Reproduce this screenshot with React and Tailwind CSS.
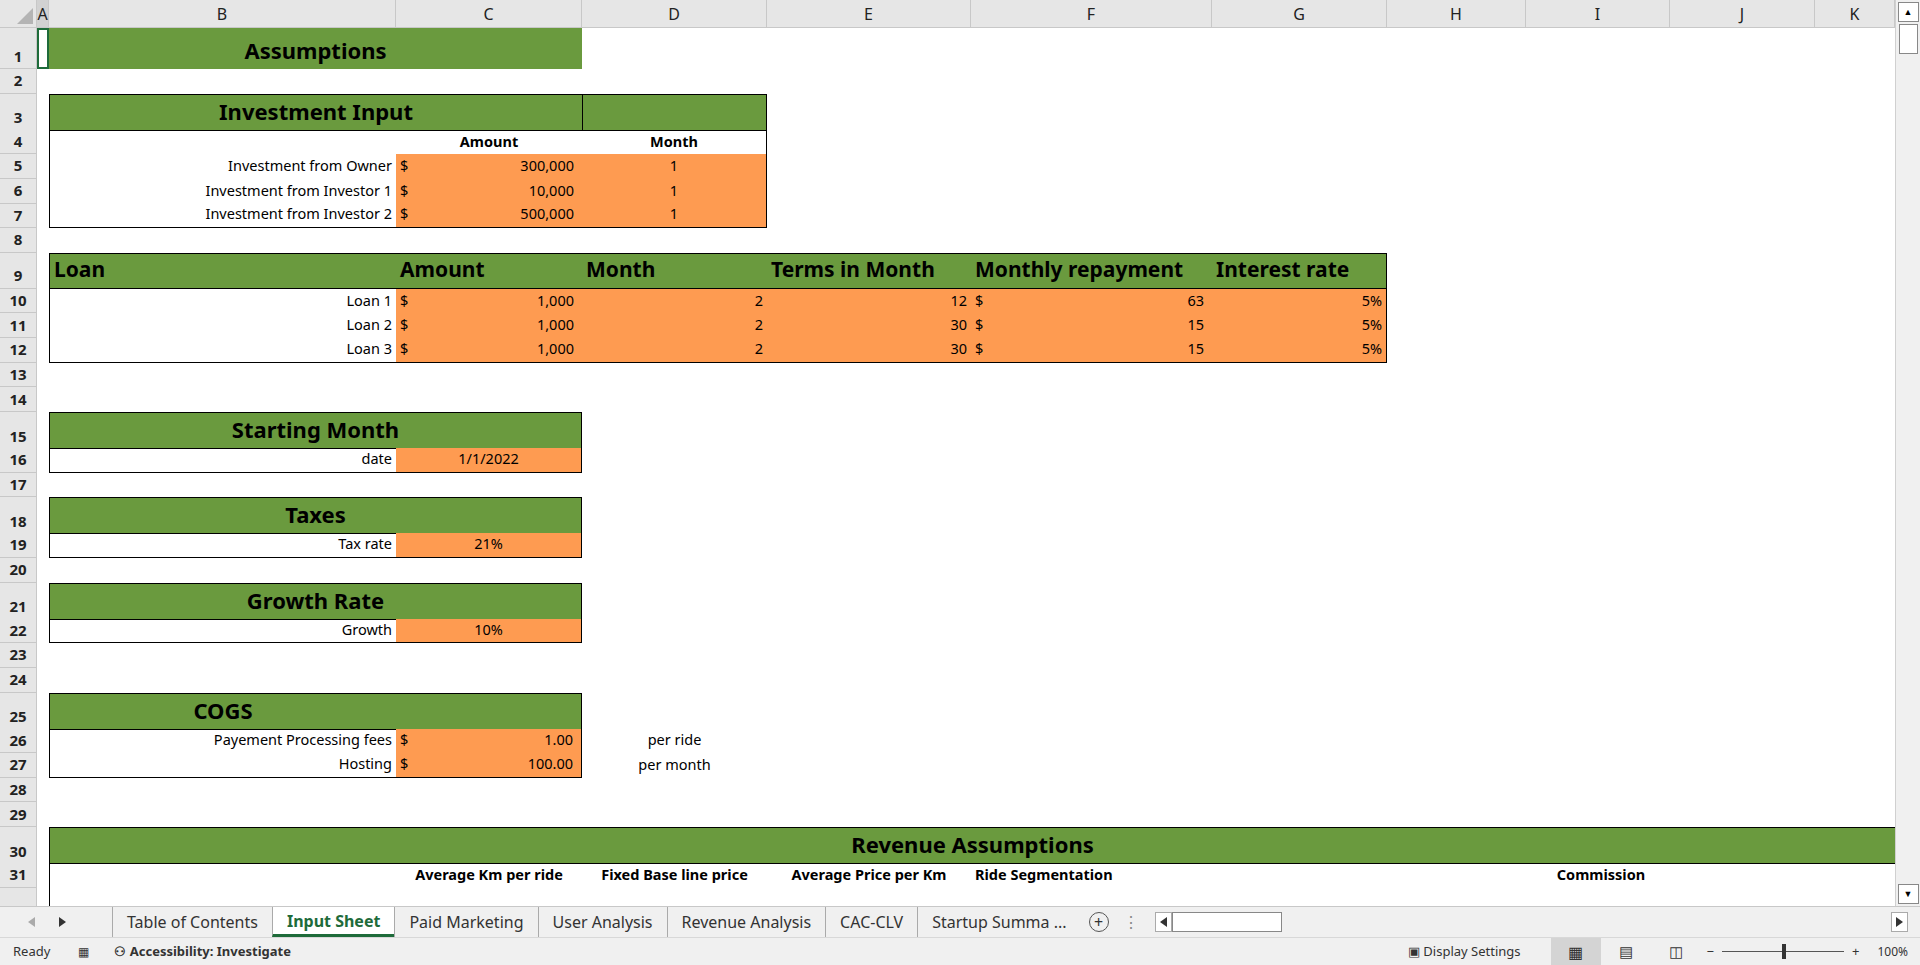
import React from "react";

const G = "bg-[#6a9a3e]";
const O = "bg-[#fe9b51]";
const COLS = "grid grid-cols-[37px_12px_347px_186px_185px_204px_241px_175px_139px_144px_145px_80px]";
const cell = "flex items-end pb-[2px] px-[4px] whitespace-nowrap overflow-hidden";

function Row({ n, h, children }) {
  return (
    <div className={COLS + " " + h}>
      <div className="col-start-1 bg-[#e6e6e6] border-r border-b border-[#c8c8c8] flex items-end justify-center pb-[1px] text-[15px] text-[#222] font-bold">{n}</div>
      {children}
    </div>
  );
}

function Money({ v, cls = "" }) {
  return (
    <div className={cell + " " + O + " justify-between " + cls}>
      <span>$</span>
      <span>{v}</span>
    </div>
  );
}

function Tri({ dir, color = "#333" }) {
  return (
    <svg width="7" height="10" viewBox="0 0 7 10">
      {dir === "l" ? <path d="M7 0 L0 5 L7 10 Z" fill={color} /> : <path d="M0 0 L7 5 L0 10 Z" fill={color} />}
    </svg>
  );
}

const colLetters = [
  ["A", "w-[12px]"], ["B", "w-[347px]"], ["C", "w-[186px]"], ["D", "w-[185px]"], ["E", "w-[204px]"],
  ["F", "w-[241px]"], ["G", "w-[175px]"], ["H", "w-[139px]"], ["I", "w-[144px]"], ["J", "w-[145px]"], ["K", "w-[80px]"],
];

const N = "h-[24.65px]";
const T = "h-[36px]";

export default function App() {
  return (
    <div className="w-[1920px] h-[965px] overflow-hidden bg-white text-[14.5px] text-black font-['Noto_Sans',sans-serif] flex flex-col">
      <div className="flex h-[906px] shrink-0">
        <div className="w-[1895px] flex flex-col overflow-hidden">
          <div className="flex h-[28px] shrink-0 bg-[#e6e6e6] border-b border-[#c8c8c8]">
            <div className="w-[37px] border-r border-[#c8c8c8] relative">
              <div className="absolute right-[3px] bottom-[3px] w-0 h-0 border-l-[16px] border-l-transparent border-b-[16px] border-b-[#b4b4b4]"></div>
            </div>
            {colLetters.map(([l, w]) => (
              <div key={l} className={w + " border-r border-[#c8c8c8] flex items-center justify-center text-[16px] text-[#222] " + (l === "A" ? "bg-[#d2d2d2]" : "")}>{l}</div>
            ))}
          </div>
          <div className="flex flex-col">
            <Row n="1" h="h-[41px]">
              <div className="col-start-2 border-2 border-[#1e6b3a]"></div>
              <div className={"col-start-3 col-span-2 " + G + " flex items-end justify-center pb-[2px] text-[22px] font-bold"}>Assumptions</div>
            </Row>
            <Row n="2" h={N} />
            <Row n="3" h={T}>
              <div className={"col-start-3 col-span-2 " + G + " border-l border-t border-b border-black flex items-end justify-center pb-[2px] text-[22px] font-bold"}>Investment Input</div>
              <div className={"col-start-5 " + G + " border border-black"}></div>
            </Row>
            <Row n="4" h={N}>
              <div className="col-start-3 border-l border-black"></div>
              <div className={cell + " col-start-4 justify-center font-bold"}>Amount</div>
              <div className={cell + " col-start-5 justify-center font-bold border-r border-black"}>Month</div>
            </Row>
            {[["5", "Investment from Owner", "300,000"], ["6", "Investment from Investor 1", "10,000"], ["7", "Investment from Investor 2", "500,000"]].map(([n, l, v]) => (
              <Row key={n} n={n} h={N}>
                <div className={cell + " col-start-3 justify-end border-l border-black " + (n === "7" ? "border-b" : "")}>{l}</div>
                <Money v={v} cls={"col-start-4 pr-[8px] " + (n === "7" ? "border-b border-black" : "")} />
                <div className={cell + " col-start-5 justify-center " + O + " border-r border-black " + (n === "7" ? "border-b" : "")}>1</div>
              </Row>
            ))}
            <Row n="8" h={N} />
            <Row n="9" h={T}>
              {[["col-start-3 border-l", "Loan"], ["col-start-4", "Amount"], ["col-start-5", "Month"], ["col-start-6", "Terms in Month"], ["col-start-7", "Monthly repayment"], ["col-start-8 border-r", "Interest rate"]].map(([c, t]) => (
                <div key={t} className={cell + " " + c + " " + G + " border-t border-b border-black text-[21px] font-bold"}>{t}</div>
              ))}
            </Row>
            {[["10", "Loan 1", "12", "63"], ["11", "Loan 2", "30", "15"], ["12", "Loan 3", "30", "15"]].map(([n, l, t, m]) => {
              const b = n === "12" ? " border-b border-black" : "";
              return (
                <Row key={n} n={n} h={N}>
                  <div className={cell + " col-start-3 justify-end border-l border-black" + b}>{l}</div>
                  <Money v="1,000" cls={"col-start-4 pr-[8px]" + b} />
                  <div className={cell + " col-start-5 justify-end " + O + b}>2</div>
                  <div className={cell + " col-start-6 justify-end " + O + b}>{t}</div>
                  <Money v={m} cls={"col-start-7 pr-[8px]" + b} />
                  <div className={cell + " col-start-8 justify-end " + O + " border-r border-black" + b}>5%</div>
                </Row>
              );
            })}
            <Row n="13" h={N} />
            <Row n="14" h={N} />
            {[["15", "16", "Starting Month", "date", "1/1/2022"], ["18", "19", "Taxes", "Tax rate", "21%"], ["21", "22", "Growth Rate", "Growth", "10%"]].map(([a, b, h, l, v], i) => (
              <React.Fragment key={a}>
                <Row n={a} h={T}>
                  <div className={"col-start-3 col-span-2 " + G + " border border-black flex items-end justify-center pb-[2px] text-[22px] font-bold"}>{h}</div>
                </Row>
                <Row n={b} h={N}>
                  <div className={cell + " col-start-3 justify-end border-l border-b border-black"}>{l}</div>
                  <div className={cell + " col-start-4 justify-center " + O + " border-r border-b border-black"}>{v}</div>
                </Row>
                {i < 2 && <Row n={String(Number(b) + 1)} h={N} />}
              </React.Fragment>
            ))}
            <Row n="23" h={N} />
            <Row n="24" h={N} />
            <Row n="25" h={T}>
              <div className={"col-start-3 " + G + " border-l border-t border-b border-black flex items-end justify-center pb-[2px] text-[22px] font-bold"}>COGS</div>
              <div className={"col-start-4 " + G + " border-r border-t border-b border-black"}></div>
            </Row>
            <Row n="26" h={N}>
              <div className={cell + " col-start-3 justify-end border-l border-black"}>Payement Processing fees</div>
              <Money v="1.00" cls="col-start-4 pr-[8px] border-r border-black" />
              <div className={cell + " col-start-5 justify-center"}>per ride</div>
            </Row>
            <Row n="27" h={N}>
              <div className={cell + " col-start-3 justify-end border-l border-b border-black"}>Hosting</div>
              <Money v="100.00" cls="col-start-4 pr-[8px] border-r border-b border-black" />
              <div className={cell + " col-start-5 justify-center"}>per month</div>
            </Row>
            <Row n="28" h={N} />
            <Row n="29" h={N} />
            <Row n="30" h={T}>
              <div className={"col-start-3 col-span-10 " + G + " border-l border-t border-b border-black flex items-end justify-center pb-[2px] text-[22px] font-bold"}>Revenue Assumptions</div>
            </Row>
            <Row n="31" h={N}>
              <div className="col-start-3 border-l border-black"></div>
              <div className={cell + " col-start-4 justify-center font-bold"}>Average Km per ride</div>
              <div className={cell + " col-start-5 justify-center font-bold"}>Fixed Base line price</div>
              <div className={cell + " col-start-6 justify-center font-bold"}>Average Price per Km</div>
              <div className={cell + " col-start-7 font-bold"}>Ride Segmentation</div>
              <div className={cell + " col-start-9 col-span-3 justify-center font-bold"}>Commission</div>
            </Row>
            <Row n="32" h="h-[36px]">
              <div className="col-start-3 border-l border-black"></div>
              <div className={cell + " col-start-8 justify-end font-bold"}>2022</div>
              <div className={cell + " col-start-9 justify-center font-bold"}>2023</div>
              <div className={cell + " col-start-10 justify-center font-bold"}>2024</div>
              <div className={cell + " col-start-11 justify-center font-bold"}>2025</div>
              <div className={cell + " col-start-12 justify-end font-bold"}>2026</div>
            </Row>
          </div>
        </div>
        <div className="w-[25px] bg-[#f0f0f0] border-l border-[#d0d0d0] flex flex-col items-center">
          <div className="w-[21px] h-[20px] mt-[2px] bg-white border border-[#888] flex items-center justify-center text-[9px]">▲</div>
          <div className="w-[19px] h-[30px] bg-white border border-[#888] mt-[2px]"></div>
          <div className="flex-1"></div>
          <div className="w-[21px] h-[20px] mb-[2px] bg-white border border-[#888] flex items-center justify-center text-[9px]">▼</div>
        </div>
      </div>
      <div className="h-[31px] shrink-0 bg-[#f0f0f0] border-t border-[#c8c8c8] flex items-stretch text-[16px] text-[#333] whitespace-nowrap">
        <div className="w-[112px] flex items-center gap-[24px] pl-[28px]">
          <Tri dir="l" color="#aaa" /><Tri dir="r" />
        </div>
        {["Table of Contents", "Input Sheet", "Paid Marketing", "User Analysis", "Revenue Analysis", "CAC-CLV", "Startup Summa ..."].map((t) => (
          <div key={t} className={"flex items-center px-[14px] border-l border-[#aaa] " + (t === "Input Sheet" ? "bg-white font-bold text-[#1e6b3a] border-b-[3px] border-b-[#1e6b3a]" : "")}>{t}</div>
        ))}
        <div className="flex items-center px-[8px]">
          <div className="w-[20px] h-[20px] rounded-full border border-[#555] flex items-center justify-center text-[16px] leading-none">+</div>
        </div>
        <div className="flex items-center px-[6px] text-[#888]">⋮</div>
        <div className="flex items-center ml-[10px] flex-1 pr-[12px]">
          <div className="h-[20px] w-[17px] bg-white border border-[#aaa] flex items-center justify-center"><Tri dir="l" /></div>
          <div className="h-[20px] w-[110px] bg-white border border-[#888]"></div>
          <div className="flex-1"></div>
          <div className="h-[20px] w-[17px] bg-white border border-[#aaa] flex items-center justify-center"><Tri dir="r" /></div>
        </div>
      </div>
      <div className="flex-1 bg-[#f0f0f0] border-t border-[#d8d8d8] flex items-center text-[13px] text-[#333]">
        <span className="pl-[13px]">Ready</span>
        <span className="ml-[28px] text-[12px]">▦</span>
        <span className="ml-[25px] font-bold">⚇ Accessibility: Investigate</span>
        <div className="flex-1"></div>
        <span className="mr-[30px]">▣ Display Settings</span>
        <div className="h-full w-[50px] bg-[#d4d4d4] flex items-center justify-center text-[16px]">▦</div>
        <div className="w-[50px] flex items-center justify-center text-[15px]">▤</div>
        <div className="w-[50px] flex items-center justify-center text-[15px]">◫</div>
        <span className="ml-[6px]">−</span>
        <div className="relative w-[122px] h-[1px] bg-[#555] mx-[8px]">
          <div className="absolute left-[60px] -top-[7px] w-[4px] h-[15px] bg-[#333]"></div>
        </div>
        <span>+</span>
        <span className="ml-[18px] mr-[12px] text-[12px]">100%</span>
      </div>
    </div>
  );
}
